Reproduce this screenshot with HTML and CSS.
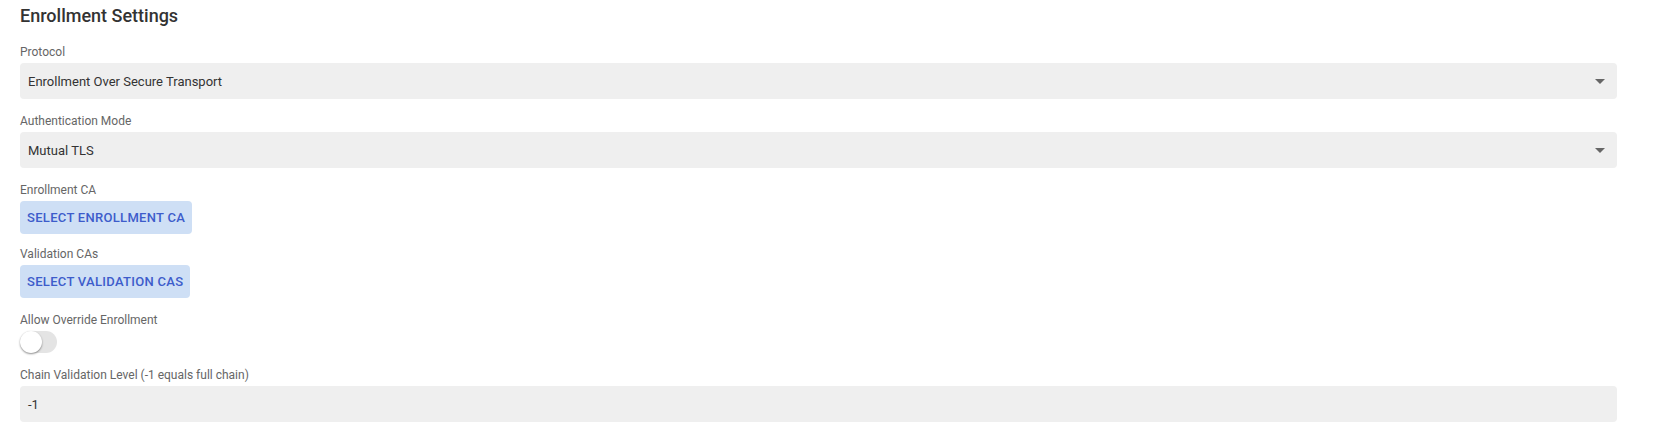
FILE: index.html
```html
<!DOCTYPE html>
<html lang="en">
<head>
<meta charset="utf-8">
<title>Enrollment Settings</title>
<link rel="stylesheet" href="styles.css">
</head>
<body>
<div class="page">
  <h2 class="title">Enrollment Settings</h2>

  <div class="group">
    <div class="label">Protocol</div>
    <div class="select">
      <span class="value">Enrollment Over Secure Transport</span>
      <span class="arrow"></span>
    </div>
  </div>

  <div class="group">
    <div class="label">Authentication Mode</div>
    <div class="select">
      <span class="value">Mutual TLS</span>
      <span class="arrow"></span>
    </div>
  </div>

  <div class="group group-tight">
    <div class="label">Enrollment CA</div>
    <button class="btn">Select Enrollment CA</button>
  </div>

  <div class="group">
    <div class="label">Validation CAs</div>
    <button class="btn">Select Validation CAs</button>
  </div>

  <div class="group">
    <div class="label">Allow Override Enrollment</div>
    <div class="toggle"><span class="knob"></span></div>
  </div>

  <div class="group">
    <div class="label">Chain Validation Level (-1 equals full chain)</div>
    <div class="input"><span class="value">-1</span></div>
  </div>
</div>
</body>
</html>
```

FILE: styles.css
```css
html, body {
  margin: 0;
  padding: 0;
  background: #ffffff;
}
body {
  font-family: Roboto, "Liberation Sans", sans-serif;
  color: #333333;
}
.page {
  padding: 4px 38px 0 20px;
}
.title {
  margin: 0 0 16px 0;
  font-size: 18px;
  line-height: 24px;
  font-weight: 500;
  color: #333333;
}
.group {
  margin-bottom: 14px;
}
.group-tight {
  margin-bottom: 12px;
}
.label {
  font-size: 12px;
  line-height: 17px;
  color: #666666;
  margin-bottom: 2px;
}
.select, .input {
  height: 36px;
  background: #efefef;
  border-radius: 4px;
  display: flex;
  align-items: center;
  justify-content: space-between;
  padding: 0 12px 0 8px;
}
.value {
  font-size: 13px;
  color: #333333;
}
.arrow {
  width: 0;
  height: 0;
  border-left: 5px solid transparent;
  border-right: 5px solid transparent;
  border-top: 5px solid #666666;
}
.btn {
  display: block;
  height: 33px;
  padding: 0 7px;
  border: none;
  border-radius: 4px;
  background: #cedff5;
  color: #3d5ccb;
  font-family: Roboto, "Liberation Sans", sans-serif;
  font-size: 13px;
  font-weight: 500;
  text-transform: uppercase;
  letter-spacing: 0.3px;
}
.toggle {
  width: 37px;
  height: 22px;
  border-radius: 11px;
  background: #e4e4e4;
  display: flex;
  align-items: center;
}
.knob {
  width: 22px;
  height: 22px;
  border-radius: 50%;
  background: #ffffff;
  box-shadow: 0 1px 2px rgba(0,0,0,0.45);
  box-sizing: border-box;
}
```
